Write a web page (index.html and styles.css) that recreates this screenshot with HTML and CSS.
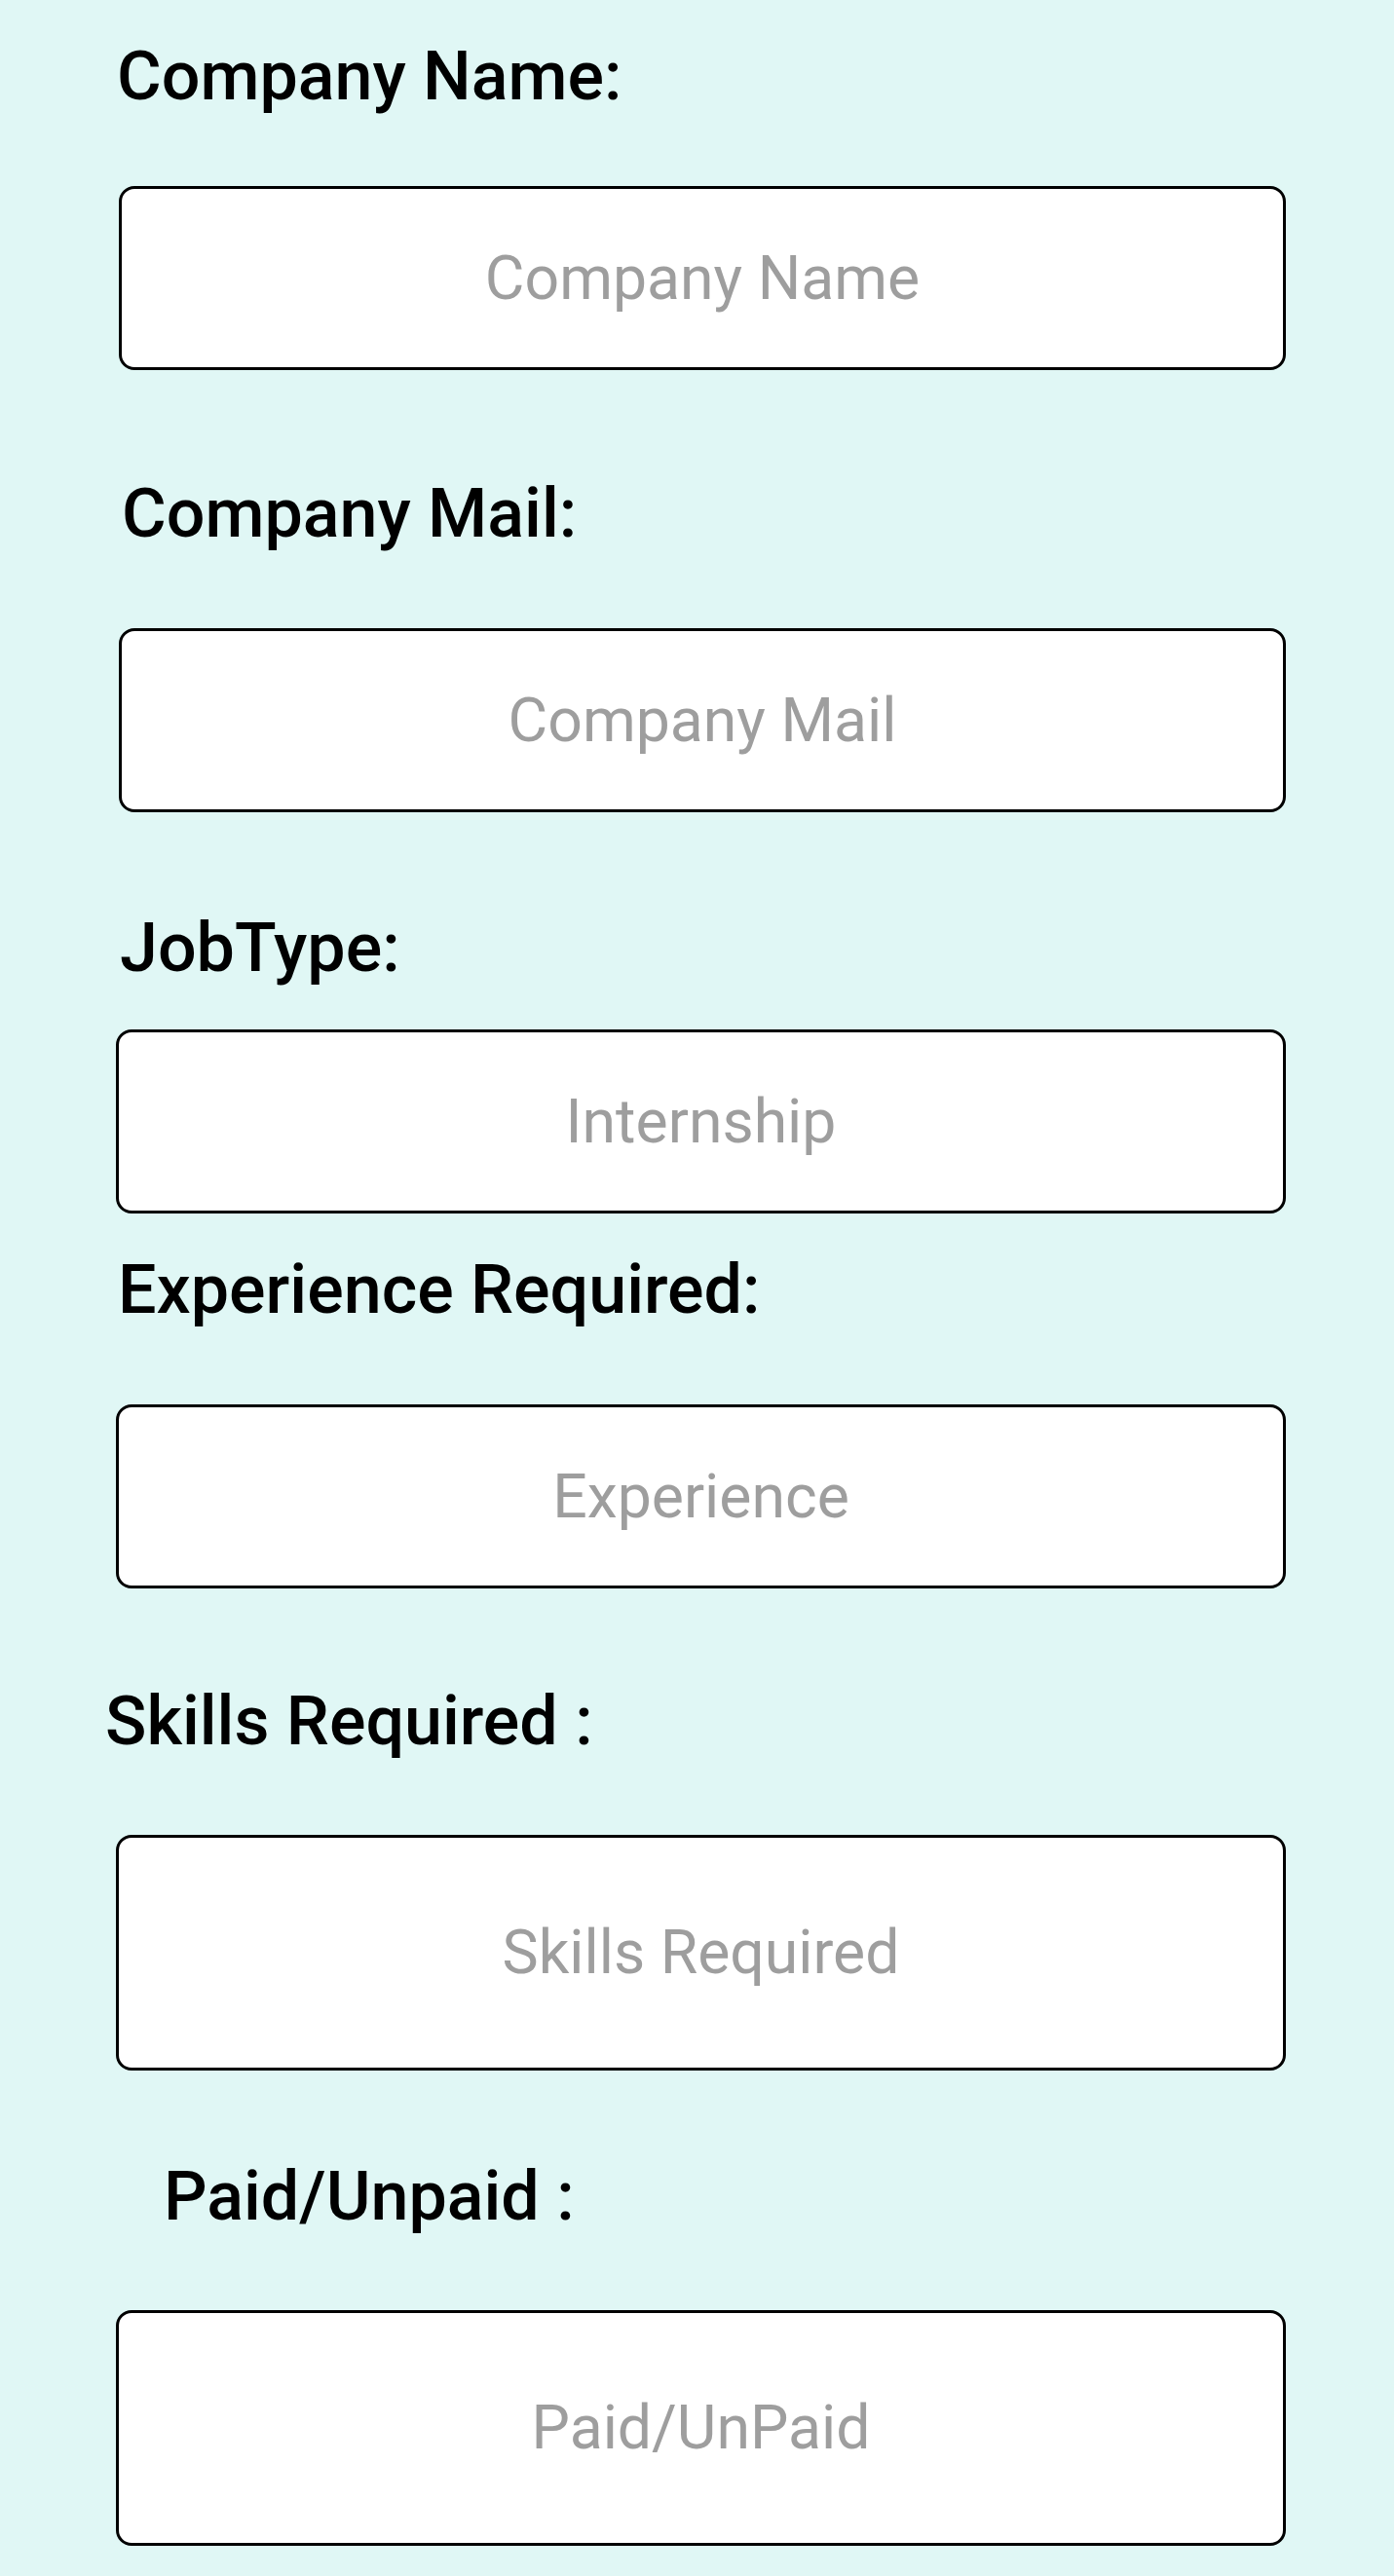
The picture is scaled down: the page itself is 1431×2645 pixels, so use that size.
FILE: index.html
```html
<!DOCTYPE html>
<html lang="en">
<head>
<meta charset="utf-8">
<title>Job Form</title>
<link rel="stylesheet" href="styles.css">
</head>
<body>
<main class="form">
  <section class="field f1">
    <div class="label">Company Name:</div>
    <div class="box"><span class="hint">Company Name</span></div>
  </section>
  <section class="field f2">
    <div class="label">Company Mail:</div>
    <div class="box"><span class="hint">Company Mail</span></div>
  </section>
  <section class="field f3">
    <div class="label">JobType:</div>
    <div class="box"><span class="hint">Internship</span></div>
  </section>
  <section class="field f4">
    <div class="label">Experience Required:</div>
    <div class="box"><span class="hint">Experience</span></div>
  </section>
  <section class="field f5">
    <div class="label">Skills Required :</div>
    <div class="box tall"><span class="hint">Skills Required</span></div>
  </section>
  <section class="field f6">
    <div class="label">Paid/Unpaid :</div>
    <div class="box tall"><span class="hint">Paid/UnPaid</span></div>
  </section>
</main>
</body>
</html>
```

FILE: styles.css
```css
html, body {
  margin: 0;
  padding: 0;
  background: #e0f7f5;
}

body {
  font-family: Roboto, "Noto Sans", "Liberation Sans", sans-serif;
  min-height: 2645px;
}

.form {
  display: flex;
  flex-direction: column;
  padding: 43px 111px 31px 0;
}

.field {
  display: flex;
  flex-direction: column;
}

.label {
  font-size: 70px;
  line-height: 70px;
  font-weight: 500;
  color: #000;
  white-space: nowrap;
}

.box {
  box-sizing: border-box;
  height: 189px;
  background: #fff;
  border: 3.5px solid #000;
  border-radius: 16px;
  display: flex;
  align-items: center;
  justify-content: center;
}

.box.tall {
  height: 242px;
}

.hint {
  font-size: 62.5px;
  line-height: 62px;
  font-weight: 400;
  color: #9e9e9e;
  white-space: nowrap;
}

/* per-field offsets */
.f1 .label { margin-left: 120px; }
.f1 .box { margin: 78px 0 0 122px; }

.f2 { margin-top: 112px; }
.f2 .label { margin-left: 125px; }
.f2 .box { margin: 83px 0 0 122px; }

.f3 { margin-top: 104px; }
.f3 .label { margin-left: 123px; }
.f3 .box { margin: 49px 0 0 119px; }

.f4 { margin-top: 43px; }
.f4 .label { margin-left: 121px; }
.f4 .box { margin: 83px 0 0 119px; }

.f5 { margin-top: 101px; }
.f5 .label { margin-left: 108px; }
.f5 .box { margin: 82px 0 0 119px; }

.f6 { margin-top: 94px; }
.f6 .label { margin-left: 168px; }
.f6 .box { margin: 82px 0 0 119px; }
```
